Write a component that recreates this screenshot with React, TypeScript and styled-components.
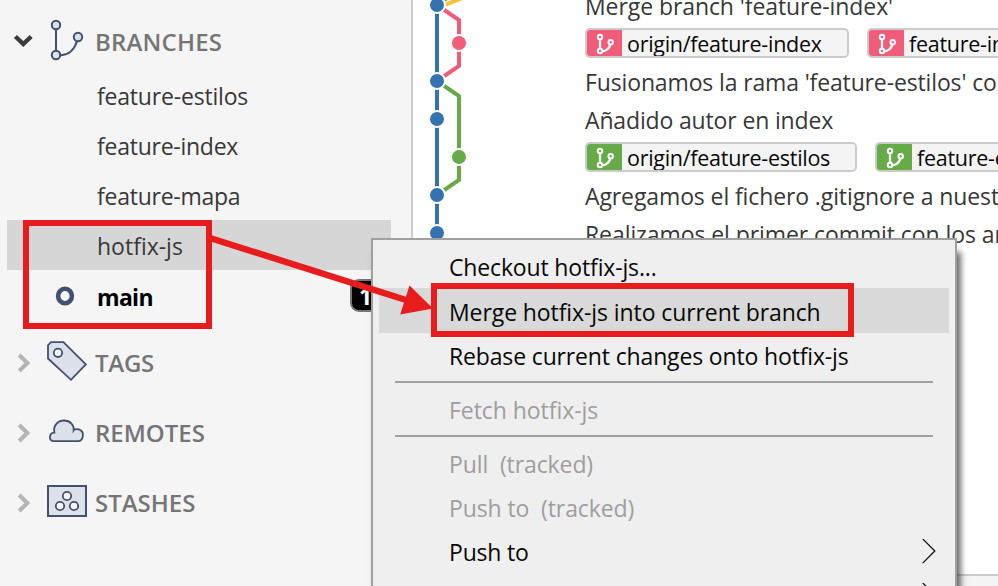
import React from "react";
import styled, { createGlobalStyle } from "styled-components";

const GlobalStyle = createGlobalStyle`
  * { box-sizing: border-box; }
  body { margin: 0; overflow: hidden; }
`;

const ink = "#43506f";
const iconFill = "#dde1ea";
const blue = "#3572b0";
const pink = "#f15c78";
const green = "#66ab48";
const red = "#e81c1c";

const Window = styled.div`
  position: relative;
  display: flex;
  width: 998px;
  height: 586px;
  overflow: hidden;
  background: #fff;
  font-family: "Open Sans", "Noto Sans", sans-serif;
  font-size: 23px;
  color: #383838;
  white-space: pre;
`;

const Sidebar = styled.aside`
  flex: none;
  width: 413px;
  background: #f5f5f5;
  border-right: 2px solid #cbcbcb;
`;

const Section = styled.section<{ $height: number }>`
  height: ${(p) => p.$height}px;
`;

const SectionHeader = styled.header<{ $first?: boolean }>`
  display: flex;
  align-items: center;
  height: 70px;
  padding: ${(p) => (p.$first ? "14px 0 0 13px" : "0 0 0 13px")};
`;

const ChevronSlot = styled.span`
  display: flex;
  width: 32px;
`;

const IconSlot = styled.span`
  display: flex;
  width: 50px;
`;

const SectionTitle = styled.h2<{ $track: number }>`
  margin: 0;
  line-height: 70px;
  font-size: 24px;
  font-weight: 600;
  color: #757575;
  letter-spacing: ${(p) => p.$track}px;
`;

const BranchRow = styled.div<{ $selected?: boolean }>`
  display: flex;
  align-items: center;
  height: 50px;
  margin: 0 20px 0 7px;
  padding-top: 2px;
  background: ${(p) => (p.$selected ? "#d6d6d6" : "transparent")};
`;

const CurrentSlot = styled.span`
  display: flex;
  justify-content: center;
  width: 90px;
  padding-left: 26px;
`;

const BranchName = styled.span<{ $track: number; $current?: boolean }>`
  flex: 1;
  padding-top: ${(p) => (p.$current ? 2 : 0)}px;
  letter-spacing: ${(p) => p.$track}px;
  font-weight: ${(p) => (p.$current ? 700 : 400)};
  color: ${(p) => (p.$current ? "#000" : "inherit")};
`;

const AheadBadge = styled.span`
  width: 42px;
  height: 33px;
  margin: -1px -1px 0 0;
  padding-left: 7px;
  border: 2px solid #777;
  border-radius: 9px;
  background: #000;
  color: #fff;
  font-weight: 700;
  font-size: 23px;
  line-height: 30px;
`;

const History = styled.main`
  display: flex;
  flex-direction: column;
  flex: 1;
  min-width: 0;
`;

const Commits = styled.div`
  display: flex;
  height: 574px;
  overflow: hidden;
`;

const GraphColumn = styled.div`
  flex: none;
  width: 172px;
`;

const CommitList = styled.div`
  margin-top: -14px;
`;

const CommitRow = styled.div<{ $track?: number }>`
  display: flex;
  align-items: center;
  height: 38px;
  padding-top: 2px;
  letter-spacing: ${(p) => p.$track ?? 0}px;
`;

const RefRow = styled.div`
  display: flex;
  gap: 18px;
  height: 38px;
  padding-top: 4px;
`;

const RefLabel = styled.span<{ $width: number }>`
  display: flex;
  flex: none;
  width: ${(p) => p.$width}px;
  height: 30px;
  overflow: hidden;
  border: 2px solid #cbcbcb;
  border-radius: 5px;
  background: #f4f4f4;
`;

const RefIcon = styled.span<{ $color: string }>`
  display: flex;
  flex: none;
  width: 36px;
  height: 28px;
  margin: -1px 0 0 -1px;
  border-radius: 4px 2px 2px 4px;
  background: ${(p) => p.$color};
`;

const RefName = styled.span<{ $track: number }>`
  margin-left: 5px;
  color: #080808;
  font-size: 21.5px;
  line-height: 28px;
  letter-spacing: ${(p) => p.$track}px;
`;

const DetailsBar = styled.div`
  flex: 1;
  border-top: 2px solid #cbcbcb;
  background: #f4f4f4;
`;

const Menu = styled.div`
  position: absolute;
  left: 371px;
  top: 238px;
  width: 586px;
  height: 380px;
  padding: 4px 6px;
  border: 2px solid #a0a0a0;
  background: #efefef;
  box-shadow: 4px 14px 6px rgba(0, 0, 0, 0.58);
`;

const MenuItem = styled.div<{ $track: number; $state?: "active" | "disabled" }>`
  display: flex;
  align-items: center;
  justify-content: space-between;
  height: ${(p) => (p.$state === "active" ? 45 : 44)}px;
  padding: 2px 13px 0 70px;
  background: ${(p) => (p.$state === "active" ? "#d9d9d9" : "transparent")};
  color: ${(p) => (p.$state === "disabled" ? "#9e9e9e" : "#080808")};
  letter-spacing: ${(p) => p.$track}px;
`;

const Separator = styled.div`
  height: 2px;
  margin: 4px 16px;
  background: #a0a0a0;
`;

const Highlight = styled.div<{ $x: number; $y: number; $w: number; $h: number }>`
  position: absolute;
  left: ${(p) => p.$x}px;
  top: ${(p) => p.$y}px;
  width: ${(p) => p.$w}px;
  height: ${(p) => p.$h}px;
  border: 6px solid ${red};
`;

const ArrowLayer = styled.svg`
  position: absolute;
  left: 200px;
  top: 225px;
`;

function Chevron({ open }: { open?: boolean }) {
  return (
    <svg width="24" height="24" viewBox="0 0 24 24" fill="none" strokeWidth={open ? 4.4 : 4.1}>
      {open ? (
        <path d="M2.4 6.5 10.3 14 18.2 6.5" stroke="#3c3c3c" />
      ) : (
        <path d="M6.2 4 14.3 12 6.2 20" stroke="#b4b4b4" />
      )}
    </svg>
  );
}

function BranchesIcon() {
  return (
    <svg width="42" height="50" viewBox="0 7 42 50" fill="none" stroke={ink} strokeWidth="2">
      <path d="M11 20V40M16 45.2C24 45 29 40 32 31.5" />
      <g fill={iconFill}>
        <circle cx="11" cy="15" r="4.2" />
        <circle cx="11" cy="45" r="4.2" />
        <circle cx="33" cy="27" r="4.2" />
      </g>
    </svg>
  );
}

function TagIcon() {
  return (
    <svg width="42" height="44" viewBox="0 0 42 44" fill={iconFill} stroke={ink} strokeWidth="1.8">
      <path d="M3 17.5V4.3L6 1.2H18.4L40.8 23.4 26 38.8Z" />
      <circle cx="13" cy="11.8" r="4.2" fill="#f5f5f5" />
    </svg>
  );
}

function CloudIcon() {
  return (
    <svg width="42" height="30" viewBox="0 0 42 30" fill={iconFill} stroke={ink} strokeWidth="1.8">
      <path d="M9 23.2C6.2 23.2 4.9 21.5 4.9 19.3 4.9 16.8 6.8 14.9 9.4 14.7 7.9 8 12.5 2.5 19 2.5 25.5 2.5 29.3 7.3 28.7 12.2 30 10.5 38 10.3 37.9 17 37.9 21.2 35.4 23.2 32.5 23.2Z" />
    </svg>
  );
}

function StashIcon() {
  return (
    <svg width="42" height="36" viewBox="0 0 42 36" fill={iconFill} stroke={ink} strokeWidth="2">
      <rect x="3" y="1" width="38" height="30" />
      <g fill="#f7f7f7" strokeWidth="1.8">
        <circle cx="22" cy="11" r="4.2" />
        <circle cx="15" cy="21" r="4.2" />
        <circle cx="29" cy="21" r="4.2" />
      </g>
    </svg>
  );
}

function RefGlyph() {
  return (
    <svg width="36" height="28" viewBox="0 0 36 28" fill="none" stroke="#fff" strokeWidth="2">
      <path d="M14 10.5V19.5M16.5 22.5C21 21.5 23.5 19 24.3 15.5" strokeWidth="2.3" />
      <circle cx="14" cy="8" r="2.2" />
      <circle cx="14" cy="22" r="2.2" />
      <circle cx="24.7" cy="13.2" r="2.2" />
    </svg>
  );
}

const nodes = [
  { x: 24, y: 5, color: blue },
  { x: 46, y: 43, color: pink },
  { x: 24, y: 81, color: blue },
  { x: 24, y: 119, color: blue },
  { x: 46, y: 157, color: green },
  { x: 24, y: 195, color: blue },
  { x: 24, y: 233, color: blue },
];

function Graph() {
  return (
    <svg width="172" height="260" viewBox="0 0 172 260" fill="none" strokeWidth="4">
      <path d="M24 5 46-10" stroke={green} />
      <path d="M24 8 52-3" stroke="#f8c23f" />
      <path d="M24 5 46 20V66L24 81" stroke={pink} />
      <path d="M24 81 46 96V180L24 195" stroke={green} />
      <path d="M24 5V233" stroke={blue} />
      {nodes.map((n) => (
        <circle key={n.y} cx={n.x} cy={n.y} r="8" fill={n.color} stroke="#fff" strokeWidth="2" />
      ))}
    </svg>
  );
}

function SubmenuArrow() {
  return (
    <svg width="14" height="26" viewBox="0 1 14 26" fill="none" stroke="#111" strokeWidth="1.3">
      <path d="M.7.9 12.8 13 .7 25.1" />
    </svg>
  );
}

function Ref({ color, name, width, track }: { color: string; name: string; width: number; track: number }) {
  return (
    <RefLabel $width={width}>
      <RefIcon $color={color}>
        <RefGlyph />
      </RefIcon>
      <RefName $track={track}>{name}</RefName>
    </RefLabel>
  );
}

const branches = [
  { name: "feature-estilos", track: -0.19 },
  { name: "feature-index", track: -0.25 },
  { name: "feature-mapa", track: -0.25 },
  { name: "hotfix-js", track: 0, selected: true },
];

const sections = [
  { title: "TAGS", track: -0.25, icon: <TagIcon /> },
  { title: "REMOTES", track: 0, icon: <CloudIcon /> },
  { title: "STASHES", track: 0, icon: <StashIcon /> },
];

export default function App() {
  return (
    <>
      <GlobalStyle />
      <Window>
        <Sidebar>
          <Section $height={328}>
            <SectionHeader $first>
              <ChevronSlot>
                <Chevron open />
              </ChevronSlot>
              <IconSlot>
                <BranchesIcon />
              </IconSlot>
              <SectionTitle $track={0.2}>BRANCHES</SectionTitle>
            </SectionHeader>
            {branches.map((b) => (
              <BranchRow key={b.name} $selected={b.selected}>
                <CurrentSlot />
                <BranchName $track={b.track}>{b.name}</BranchName>
              </BranchRow>
            ))}
            <BranchRow>
              <CurrentSlot>
                <svg width="20" height="22" viewBox="0 0 20 22">
                  <ellipse cx="10" cy="11" rx="6.9" ry="7.2" fill="none" stroke={ink} strokeWidth="4.6" />
                </svg>
              </CurrentSlot>
              <BranchName $track={-0.7} $current>
                main
              </BranchName>
              <AheadBadge>1</AheadBadge>
            </BranchRow>
          </Section>
          {sections.map((s) => (
            <Section key={s.title} $height={70}>
              <SectionHeader>
                <ChevronSlot>
                  <Chevron />
                </ChevronSlot>
                <IconSlot>{s.icon}</IconSlot>
                <SectionTitle $track={s.track}>{s.title}</SectionTitle>
              </SectionHeader>
            </Section>
          ))}
        </Sidebar>

        <History>
          <Commits>
            <GraphColumn>
              <Graph />
            </GraphColumn>
            <CommitList>
              <CommitRow $track={-0.08}>Merge branch 'feature-index'</CommitRow>
              <RefRow>
                <Ref color={pink} name="origin/feature-index" width={264} track={-0.28} />
                <Ref color={pink} name="feature-index" width={210} track={-0.28} />
              </RefRow>
              <CommitRow $track={-0.14}>Fusionamos la rama 'feature-estilos' co</CommitRow>
              <CommitRow $track={-0.15}>Añadido autor en index</CommitRow>
              <RefRow>
                <Ref color={green} name="origin/feature-estilos" width={272} track={-0.28} />
                <Ref color={green} name="feature-estilos" width={218} track={-0.28} />
              </RefRow>
              <CommitRow $track={-0.11}>Agregamos el fichero .gitignore a nuest</CommitRow>
              <CommitRow $track={-0.08}>Realizamos el primer commit con los ar</CommitRow>
            </CommitList>
          </Commits>
          <DetailsBar />
        </History>

        <Menu>
          <MenuItem $track={-0.15}>Checkout hotfix-js...</MenuItem>
          <MenuItem $track={-0.09} $state="active">
            Merge hotfix-js into current branch
          </MenuItem>
          <MenuItem $track={-0.15}>Rebase current changes onto hotfix-js</MenuItem>
          <Separator />
          <MenuItem $track={-0.05} $state="disabled">
            Fetch hotfix-js
          </MenuItem>
          <Separator />
          <MenuItem $track={-0.1} $state="disabled">
            {"Pull  (tracked)"}
          </MenuItem>
          <MenuItem $track={-0.1} $state="disabled">
            {"Push to  (tracked)"}
          </MenuItem>
          <MenuItem $track={-0.2}>
            Push to
            <SubmenuArrow />
          </MenuItem>
          <MenuItem $track={0}>
            <span />
            <SubmenuArrow />
          </MenuItem>
        </Menu>

        <Highlight $x={23} $y={220} $w={189} $h={109} />
        <Highlight $x={431} $y={283} $w={423} $h={54} />
        <ArrowLayer width="240" height="100" viewBox="200 225 240 100">
          <path d="M210 238 406 300" stroke={red} strokeWidth="6.5" />
          <path d="M409.5 285.5 433 308.5 400.2 314.5Z" fill={red} />
        </ArrowLayer>
      </Window>
    </>
  );
}
